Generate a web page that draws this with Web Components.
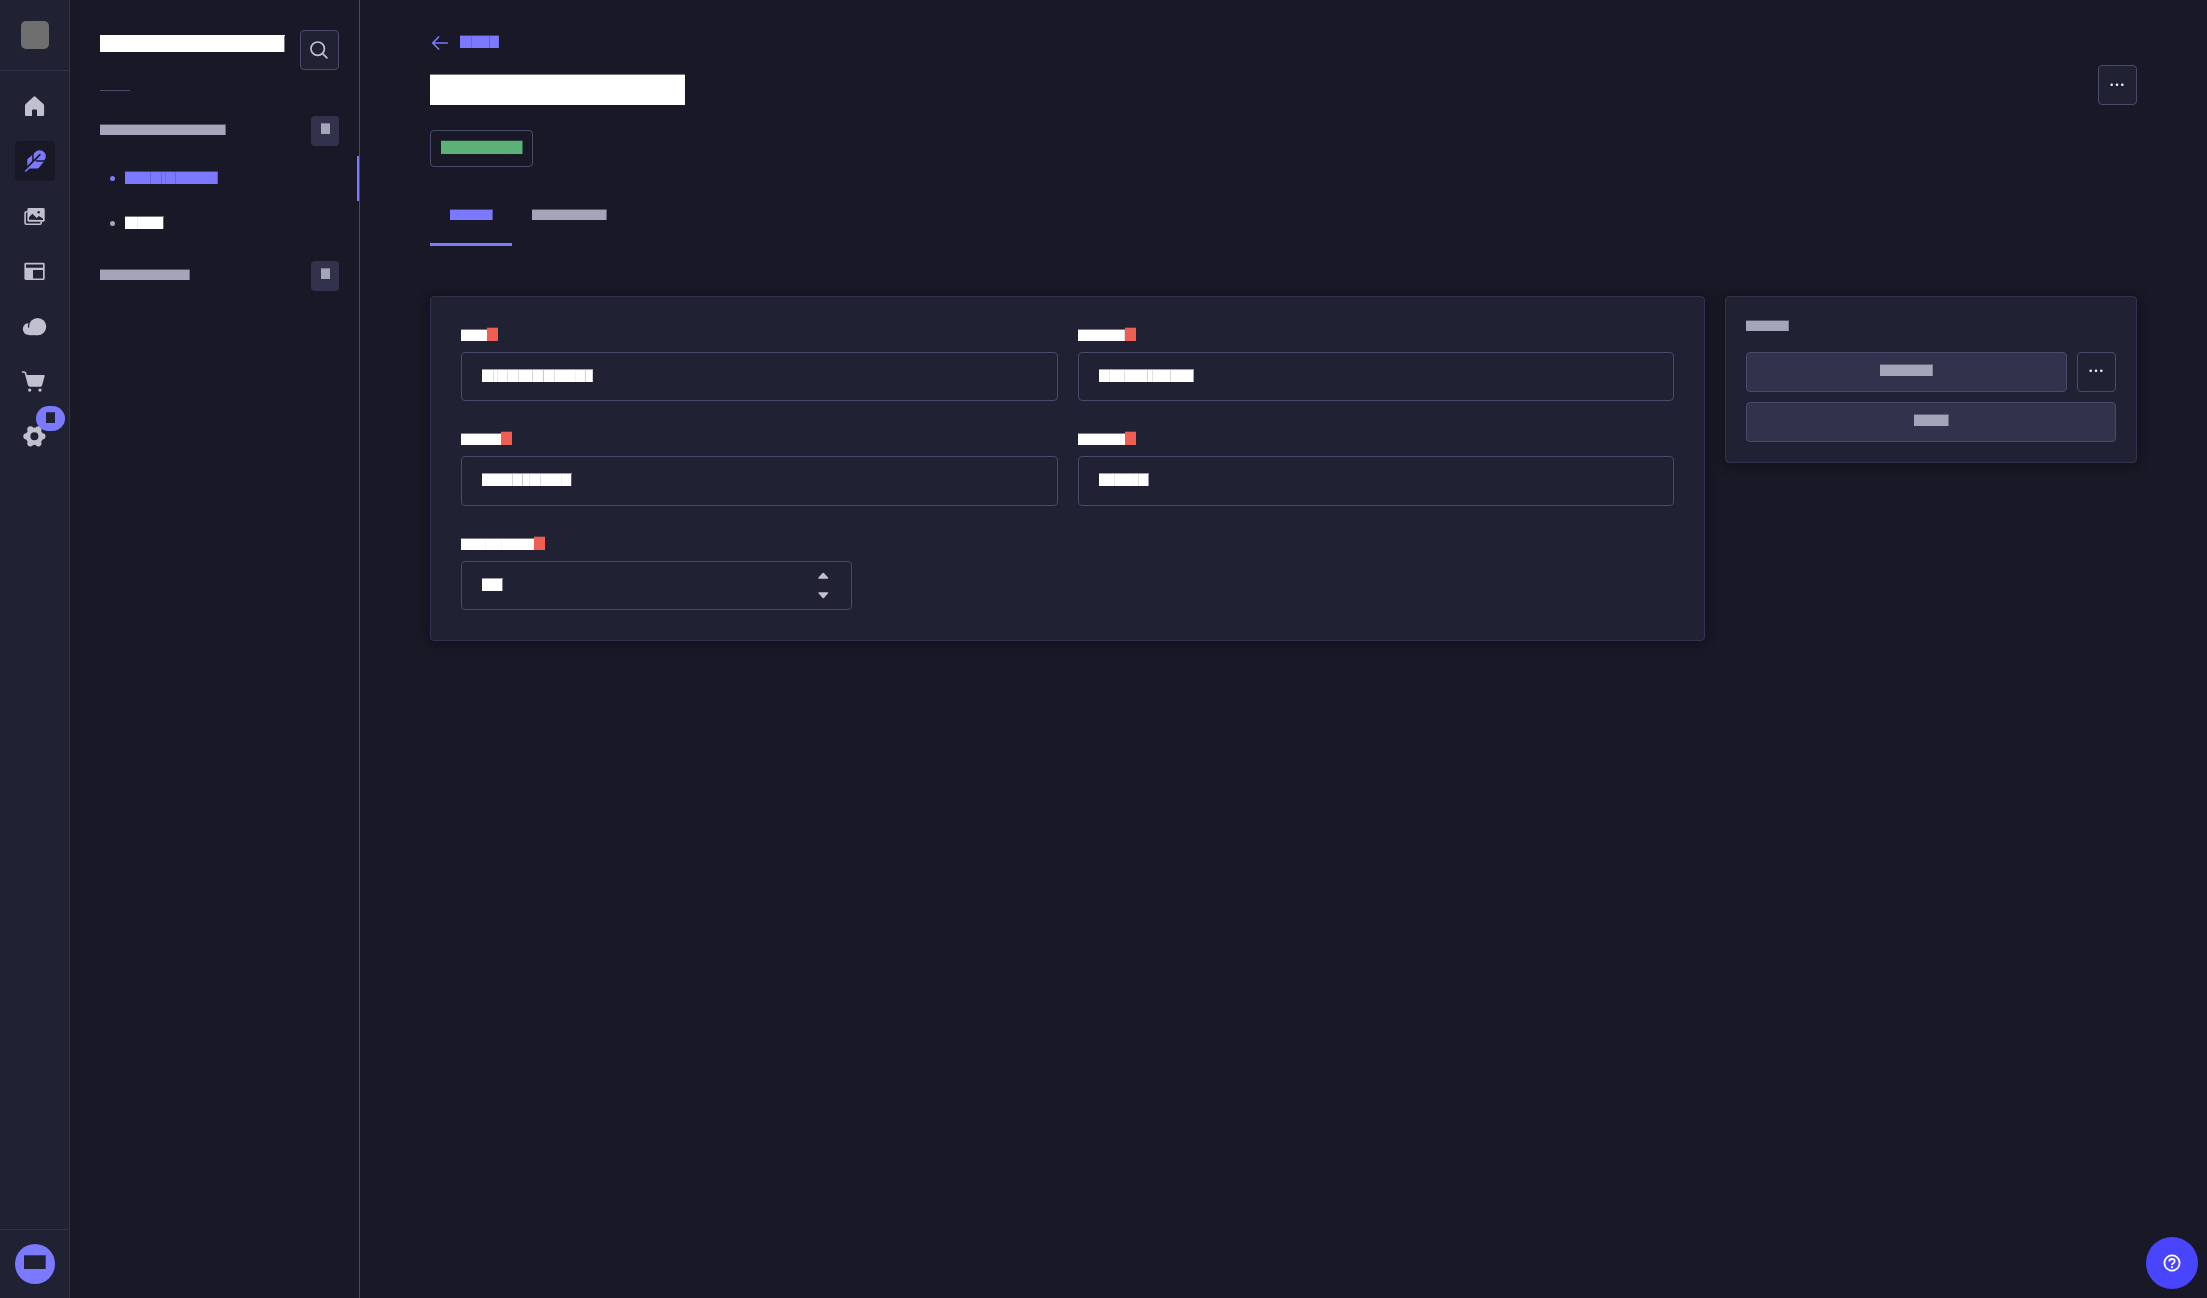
<!DOCTYPE html>
<html lang="en">
<head>
<meta charset="utf-8">
<title>Entry editor</title>
<style>
html,body{margin:0;height:100%;background:#181826;overflow:hidden}
body{font-family:Inter,"Liberation Sans",sans-serif}
</style>
</head>
<body>
<app-shell></app-shell>
<script>
const define = (name, html, init) => {
  const t = document.createElement('template');
  t.innerHTML = `<style>*{box-sizing:border-box}:host{display:block;box-sizing:border-box}svg{display:block}</style>${html}`;
  customElements.define(name, class extends HTMLElement {
    constructor() {
      super();
      this.attachShadow({mode: 'open'}).append(t.content.cloneNode(true));
    }
    connectedCallback() { if (init) init(this, this.shadowRoot); }
  });
};

/* Placeholder block: w/h size, c colour, top/left/right soft edge strength, seams as "x:strength" */
define('text-block', `<style>:host{flex:none}</style>`, el => {
  const a = (n, d) => el.getAttribute(n) ?? d;
  const c = a('c', '#fff'), w = +a('w'), h = +a('h');
  const top = +a('top', 40), edge = +a('edge', 100);
  el.style.width = w + 'px';
  el.style.height = h + 'px';
  el.style.marginTop = a('y', 0) + 'px';
  const soft = p => `color-mix(in srgb, ${c} ${p}%, transparent)`;
  const stops = [];
  let x = 0;
  const add = (from, p) => { stops.push(`${c} ${x}px ${from}px`, `${soft(p)} ${from}px ${from + 1}px`); x = from + 1; };
  for (const s of a('seams', '').split(' ').filter(Boolean)) { const [k, p] = s.split(':'); add(+k, +p); }
  if (edge < 100) add(w - 1, edge);
  if (x < w) stops.push(`${c} ${x}px ${w}px`);
  el.style.background = `linear-gradient(${soft(top)},${soft(top)}) 0 0/100% 1px no-repeat, linear-gradient(90deg, ${stops.join(',')}) 0 1px/100% 100% no-repeat`;
});

define('nav-item', `<style>
:host{width:40px;height:40px;border-radius:4px;color:#c0c0cf;position:relative}
:host([active]){background:#181826;color:#7b79ff}
::slotted(svg){display:block}
</style><slot></slot><slot name="badge"></slot>`);

define('nav-badge', `<style>
:host{position:absolute;left:21px;top:-10px;width:29px;height:25px;border-radius:13px;background:#7b79ff;padding:6px 0 0 10px}
</style><text-block w="9" h="11" c="#212134" top="75"></text-block>`);

define('main-nav', `<style>
:host{width:70px;height:100%;flex:none;background:#212134;border-right:1px solid #32324d;display:flex;flex-direction:column}
.brand{height:71px;border-bottom:1px solid #32324d;padding:21px 0 0 21.400px}
.logo{width:27.300px;height:27.500px;border-radius:5px;background:#6f6f6f}
.items{flex:1;display:flex;flex-direction:column;gap:15px;padding:15px 0 0 15px}
.user{height:69px;border-top:1px solid #32324d;padding:14px 0 0 15px}
.avatar{width:40px;height:40px;border-radius:50%;background:#7b79ff;padding:11px 0 0 9px}
</style>
<div class="brand"><div class="logo"></div></div>
<div class="items">
<nav-item><svg width="40" height="40"><path fill="currentColor" d="M18.3 10.9a1.7 1.7 0 0 1 2.400 0l7.700 7.100q.7.7.7 1.600V29q0 1.100-1.100 1.100h-6V24.600q0-1.100-1.100-1.100h-2.800q-1.100 0-1.100 1.100V30.100h-5.900Q10 30.100 10 29V19.600q0-.9.7-1.600z"/></svg></nav-item>
<nav-item active><svg width="40" height="40"><g fill="currentColor"><path d="M18.700 19.200V13q2.500-3.700 5.900-3.700 3 0 4.700 1.900 1.600 1.700 1.500 4.500-.2 2-1.600 3.500z"/><path d="M12.300 18.300l4.900-4.200v6L12.300 25z"/><path d="M19.800 20.700h9l-4.700 5.800q-.8.900-1.900.9h-9.100z"/></g><path d="M17.200 21.600 25 13.600" stroke="#181826" stroke-width="1.600" stroke-linecap="round"/><path d="M10.800 30 20.300 20.500" stroke="currentColor" stroke-width="1.700" stroke-linecap="round"/></svg></nav-item>
<nav-item><svg width="40" height="40"><path d="M12.500 15.800h-1.200q-1.200 0-1.200 1.200v10q0 1.200 1.200 1.200h13.800q1.100 0 1.100-1.100V25.500" fill="none" stroke="currentColor" stroke-width="1.600"/><rect x="12.400" y="12" width="17.300" height="13.700" rx="1.400" fill="currentColor"/><path d="M14 23.700v-2.400l3.400-3.500 4.300 4.300 2.100-2 4.200 2.500v1.400z" fill="#212134"/><circle cx="23.700" cy="16.200" r="1.200" fill="#212134"/></svg></nav-item>
<nav-item><svg width="40" height="40"><rect x="9.400" y="11.700" width="20.300" height="17.300" rx="1.400" fill="currentColor"/><path d="M11 13.600h17v3.200H11zM18 19h10v8.500H18z" fill="#212134"/></svg></nav-item>
<nav-item><svg width="40" height="40"><g fill="currentColor"><circle cx="22.600" cy="20.600" r="8.650"/><circle cx="13.800" cy="23.100" r="6"/><path d="M13.800 20h9v9.200h-9z"/></g><path d="M14.200 16.500q-.7 2.200-.6 4.500" stroke="#212134" stroke-width="1.300" fill="none" stroke-linecap="round"/></svg></nav-item>
<nav-item><svg width="40" height="40"><path d="M7.500 11h1.700q1 0 1.300 1l3.200 12" fill="none" stroke="currentColor" stroke-width="1.600" stroke-linecap="round"/><path fill="currentColor" d="M11.300 13.900h17.600q1 0 .8 1l-2.600 9.400q-.4 1.500-1.900 1.500H15.300q-1.500 0-1.900-1.500z"/><circle cx="14.700" cy="29.100" r="1.650" fill="currentColor"/><circle cx="25" cy="29.100" r="1.650" fill="currentColor"/></svg></nav-item>
<nav-item><svg width="40" height="40"><g fill="currentColor"><circle cx="19.400" cy="20.300" r="8.700"/><circle cx="27.400" cy="20.300" r="3.100"/><circle cx="11.400" cy="20.300" r="3.100"/><circle cx="23.400" cy="13.300" r="3.100"/><circle cx="15.400" cy="13.300" r="3.100"/><circle cx="23.400" cy="27.300" r="3.100"/><circle cx="15.400" cy="27.300" r="3.100"/></g><circle cx="19.400" cy="20.300" r="4" fill="#212134"/></svg><nav-badge slot="badge"></nav-badge></nav-item>
</div>
<div class="user"><div class="avatar"><text-block w="22" h="14" c="#212134" top="70" edge="70"></text-block></div></div>`);

define('icon-button', `<style>
:host{width:39px;height:40px;flex:none;background:#212134;border:1px solid #4a4a6a;border-radius:4px}
:host([compact]) svg{margin-top:-1px}
::slotted(svg),svg{display:block}
</style><slot><svg width="37" height="38" fill="#fff"><circle cx="12.700" cy="18.800" r="1.250"/><circle cx="18" cy="18.800" r="1.250"/><circle cx="23.300" cy="18.800" r="1.250"/></svg></slot>`);

define('nav-section', `<style>
:host{display:flex;justify-content:space-between;height:30px;width:239px}
.count{width:28px;height:30px;border-radius:4px;background:#32324d;padding:7px 0 0 10px}
</style><slot></slot><div class="count"><text-block w="9" h="11" c="#a5a5ba" top="65"></text-block></div>`);

define('nav-link', `<style>
:host{height:45px;display:flex;width:259px;color:#a5a5ba;padding-left:10px}
:host([active]){color:#7b79ff;border-right:2px solid #7b79ff}
i{width:5px;height:5px;border-radius:50%;background:currentColor;margin:20px 10px 0 0}
</style><i></i><slot></slot>`);

define('side-nav', `<style>
:host{width:290px;height:100%;flex:none;border-right:1px solid #4a4a6a;padding:30px 0 0 30px}
.head{display:flex;justify-content:space-between;width:239px;height:60px}
hr{width:30px;height:1px;border:0;background:#4a4a6a;margin:0 0 25px}
.links{padding:10px 0 15px}
</style>
<div class="head"><text-block w="185" h="17" y="5" top="100" edge="40"></text-block><icon-button><svg width="37" height="38" fill="none" stroke="#c0c0cf" stroke-width="1.700" stroke-linecap="round"><circle cx="16.700" cy="17.700" r="6.700"/><path d="m21.600 22.600 4.300 4.300"/></svg></icon-button></div>
<hr>
<nav-section><text-block w="126" h="11" y="8" c="#a5a5ba" edge="60"></text-block></nav-section>
<div class="links">
<nav-link active><text-block w="93" h="13" y="15" c="#7b79ff" edge="70" seams="25:80 36:80 40:88 50:80"></text-block></nav-link>
<nav-link><text-block w="39" h="13" y="15" edge="30" seams="12:92"></text-block></nav-link>
</div>
<nav-section><text-block w="90" h="11" y="8" c="#a5a5ba" edge="65"></text-block></nav-section>`);

define('form-field', `<style>
:host{height:74px;display:flex;flex-direction:column}
.label{display:flex;height:25px;flex:none}
.box{flex:1;border:1px solid #4a4a6a;border-radius:4px;background:#212134;padding:16px 19px 0 20px;display:flex;justify-content:space-between}
</style><div class="label"><slot name="label"></slot><text-block h="14" w="11" c="#ee5e52" top="30"></text-block></div>
<div class="box"><slot></slot><slot name="end"></slot></div>`);

define('number-stepper', `<style>:host{width:18px;height:30px;margin:-9px 0 0}</style>
<svg width="18" height="30" fill="#c0c0cf"><path d="M4.300 8.800 8.500 4a1 1 0 0 1 1.400 0l4.400 4.800q.2.900-.8.900H5q-1 0-.7-.9zM4.300 24l4.300 5a1 1 0 0 0 1.400 0l4.300-5q.2-.7-.7-.7H5q-1 0-.7.7z"/></svg>`);

define('panel-card', `<style>
:host{background:#212134;border:1px solid #32324d;border-radius:4px;box-shadow:0 1px 14px rgba(3,3,8,.32)}
</style><slot></slot>`);

define('form-grid', `<style>
:host{display:grid;grid-template-columns:repeat(6,1fr);column-gap:20px;grid-template-rows:74px 75px 74px;row-gap:30px;padding:30px 30px 0}
form-field{grid-column:span 3}
form-field.third{grid-column:span 2}
.tall{height:75px}
</style>
<form-field><text-block slot="label" w="26" h="12" y="2"></text-block><text-block w="111" h="13" top="55" edge="80" seams="11:85 15:90 25:85 36:85 50:82 61:75 72:85 93:95 103:80"></text-block></form-field>
<form-field><text-block slot="label" w="47" h="12" y="2" edge="85"></text-block><text-block w="95" h="13" top="55" edge="60" seams="10:90 25:85 48:82 53:88 71:82"></text-block></form-field>
<form-field class="tall"><text-block slot="label" w="40" h="12" y="2"></text-block><text-block w="90" h="13" top="55" edge="25" seams="30:82 40:75 47:90 58:85 79:95"></text-block></form-field>
<form-field class="tall"><text-block slot="label" w="47" h="12" y="2" seams="42:95"></text-block><text-block w="50" h="13" top="55" edge="55" seams="15:90 34:96 39:85"></text-block></form-field>
<form-field class="third"><text-block slot="label" w="73" h="12" y="2" seams="24:95 40:95"></text-block><text-block w="21" h="13" top="55" edge="40"></text-block><number-stepper slot="end"></number-stepper></form-field>`);

define('action-button', `<style>
:host{flex:1;height:40px;background:#32324d;border:1px solid #4a4a6a;border-radius:4px;display:flex;justify-content:center;padding-top:11px}
</style><slot></slot>`);

define('action-panel', `<style>
:host{padding:23px 20px 0;display:flex;flex-direction:column;gap:10px;height:165px}
.title{height:22px}.row{display:flex;gap:10px;height:40px}
</style><div class="title"><text-block w="43" h="11" c="#a5a5ba" edge="75"></text-block></div>
<div class="row"><action-button><text-block w="53" h="12" c="#a5a5ba" edge="70"></text-block></action-button><icon-button compact></icon-button></div>
<div class="row"><action-button><text-block w="35" h="12" c="#a5a5ba" edge="50"></text-block></action-button></div>`);

define('page-header', `<style>
:host{height:113px;display:flex;justify-content:space-between}
.back{display:flex;height:39px}.back svg{width:30px}
.title{height:56px}
.status{width:103px;height:37px;border:1px solid #4a4a6a;border-radius:4px;padding:9px 0 0 10px}
icon-button{margin-top:30px}
</style><div><div class="back"><svg width="30" height="24" fill="none" stroke="#7b79ff" stroke-width="1.700" stroke-linecap="round" stroke-linejoin="round"><path d="M17.200 8H2.700M8.600 2 2.700 8l5.900 6"/></svg><text-block w="39" h="13" c="#7b79ff" seams="11:82 29:75" edge="90"></text-block></div>
<div class="title"><text-block w="255" h="31" edge="96"></text-block></div>
<div class="status"><text-block w="82" h="14" c="#5cb176" top="25" edge="50"></text-block></div></div><icon-button></icon-button>`);

define('tab-item', `<style>
:host{height:57px;padding:20px 20px 0}
:host([active]){border-bottom:3px solid #7b79ff;width:82px}
</style><slot></slot>`);

define('page-main', `<style>
:host{flex:1;padding:35px 70px 0}
.tabs{display:flex;margin-top:41px;height:57px}
.cols{display:flex;gap:20px;align-items:flex-start;margin-top:50px}
.form{flex:1;height:345px}.side{width:412px;height:167px;flex:none}
</style><page-header></page-header>
<div class="tabs"><tab-item active><text-block w="43" h="11" c="#7b79ff" edge="60"></text-block></tab-item><tab-item><text-block w="75" h="11" c="#a5a5ba" edge="55"></text-block></tab-item></div>
<div class="cols"><panel-card class="form"><form-grid></form-grid></panel-card><panel-card class="side"><action-panel></action-panel></panel-card></div>`);

define('help-button', `<style>
:host{position:absolute;right:9px;bottom:9px;width:52px;height:52px;border-radius:50%;background:#4945ff}
</style><svg width="52" height="52" fill="none" stroke="#fff" stroke-width="1.800"><circle cx="26" cy="26" r="7.600"/><path d="M23.300 24.500q0-2.500 2.700-2.500t2.700 2.300q0 1.200-1.500 1.900-1.200.6-1.200 1.700"/><circle cx="26" cy="30.200" r="1.100" fill="#fff" stroke="none"/></svg>`);

define('app-shell', `<style>
:host{display:flex;height:100vh;width:100vw;position:relative;background:#181826}
</style><main-nav></main-nav><side-nav></side-nav><page-main></page-main><help-button></help-button>`);
</script>
</body>
</html>
